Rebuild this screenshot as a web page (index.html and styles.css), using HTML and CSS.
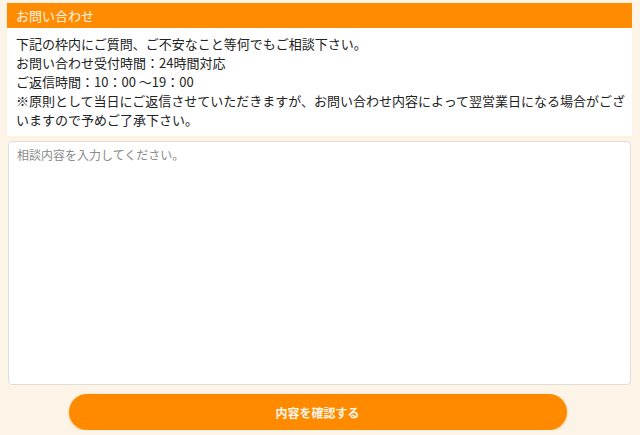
FILE: index.html
```html
<!DOCTYPE html>
<html lang="ja">
<head>
  <meta charset="UTF-8" />
  <meta name="viewport" content="width=device-width, initial-scale=1.0" />
  <title>お問い合わせ</title>
  <link rel="stylesheet" href="styles.css">
</head>
<body>
  <div class="contact">
    <h2 class="contact-title">お問い合わせ</h2>
    <div class="contact-body">
      <p>下記の枠内にご質問、ご不安なこと等何でもご相談下さい。</p>
      <p>お問い合わせ受付時間：24時間対応</p>
      <p>ご返信時間：10：00 ～19：00</p>
      <p>※原則として当日にご返信させていただきますが、お問い合わせ内容によって翌営業日になる場合がございますので予めご了承下さい。</p>
    </div>
  </div>

  <form class="contact-form">
    <textarea class="message" placeholder="相談内容を入力してください。"></textarea>
    <div class="actions">
      <button type="button" class="confirm">内容を確認する</button>
    </div>
  </form>
</body>
</html>
```

FILE: styles.css
```css
* {
  box-sizing: border-box;
}

body {
  margin: 0;
  padding: 3px 8px 0 7px;
  background-color: #fdf4e8;
  font-family: "Noto Sans CJK JP", "Noto Sans", sans-serif;
  color: #222;
}

.contact {
  background: #fff;
  box-shadow: 0 0 4px rgba(255, 240, 220, 0.9);
}

.contact-title {
  margin: 0;
  height: 25px;
  line-height: 25px;
  padding-left: 9px;
  background-color: #ff8b00;
  color: #fff4e6;
  font-size: 13px;
  font-weight: normal;
}

.contact-body {
  padding: 6px 3px 7px 9px;
  font-size: 13px;
  line-height: 19px;
}

.contact-body p {
  margin: 0;
}

.contact-form {
  margin-top: 5px;
}

.message {
  display: block;
  width: 623px;
  height: 244px;
  margin-left: 1px;
  padding: 4px 8px;
  border: 1px solid #e2ddd8;
  border-radius: 4px;
  background: #fff;
  font-family: inherit;
  font-size: 12px;
  line-height: 17px;
  resize: none;
}

.message::placeholder {
  color: #8a8a8a;
}

/* confirm button */
.actions {
  display: flex;
  justify-content: center;
  margin-top: 9px;
  padding-right: 4px;
}

.confirm {
  width: 498px;
  height: 36px;
  border: none;
  border-radius: 18px;
  background-color: #ff8a00;
  color: #fff6ea;
  font-family: inherit;
  font-size: 12px;
  font-weight: bold;
  box-shadow: 0 1px 3px rgba(230, 120, 0, 0.35);
  cursor: pointer;
}
```
